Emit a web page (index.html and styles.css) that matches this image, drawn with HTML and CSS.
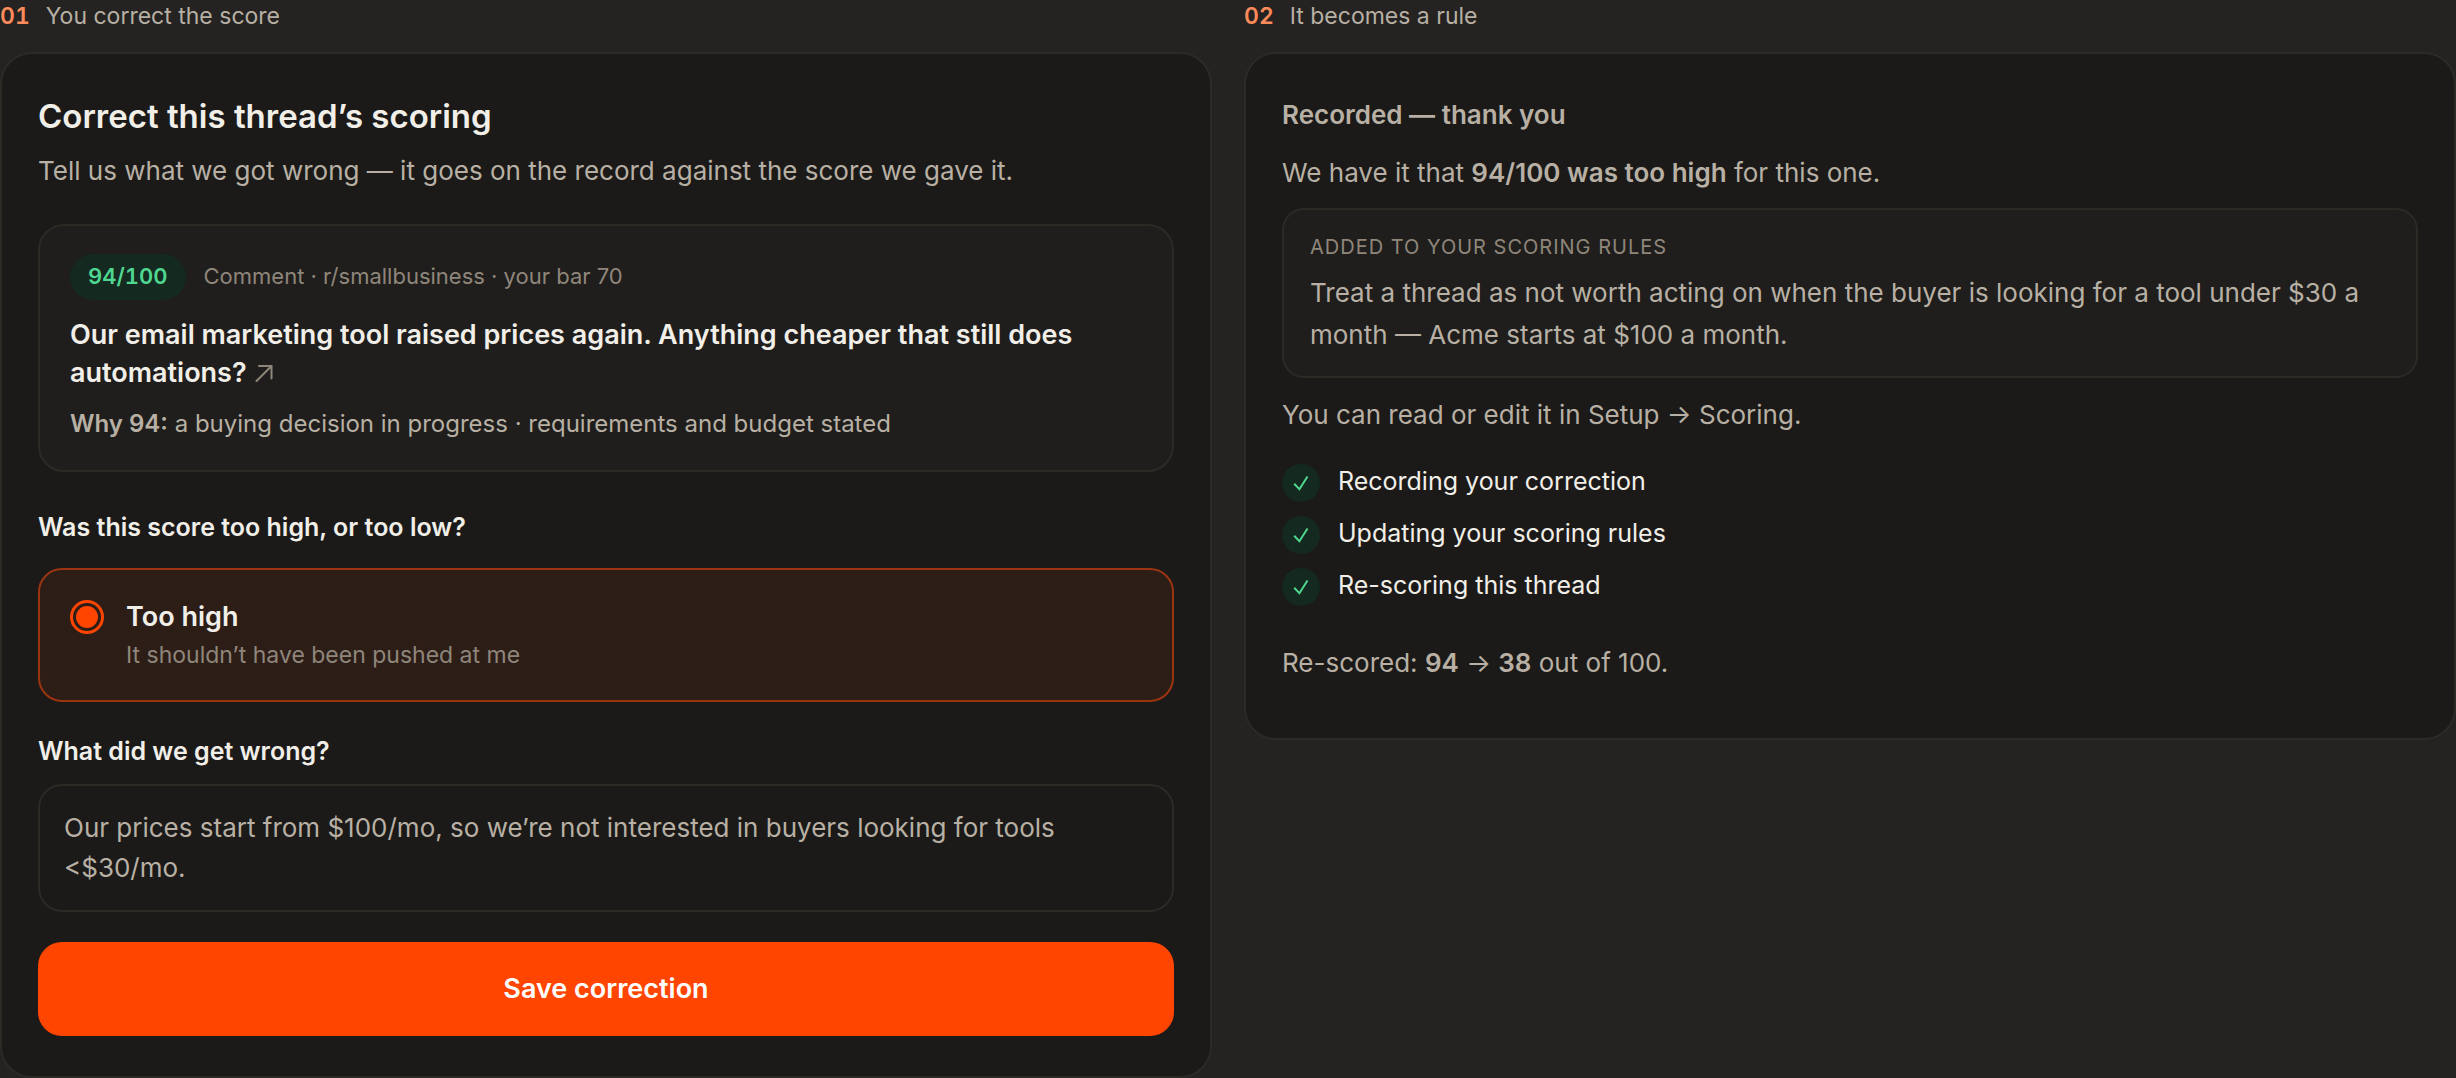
FILE: index.html
```html
<!DOCTYPE html>
<html lang="en">
<head>
    <meta charset="UTF-8">
    <meta name="viewport" content="width=device-width, initial-scale=1.0">
    <title>Correct this thread’s scoring</title>
    <link rel="stylesheet" href="styles.css">
</head>
<body>

    <main class="steps">
        <!-- Step 1: the correction form -->
        <section class="step">
            <p class="step-label"><span class="step-number">01</span> You correct the score</p>

            <form class="card">
                <h2>Correct this thread’s scoring</h2>
                <p class="lede">Tell us what we got wrong — it goes on the record against the score we gave it.</p>

                <div class="thread">
                    <div class="thread-meta">
                        <span class="score">94/100</span>
                        <span>Comment · r/smallbusiness · your bar 70</span>
                    </div>
                    <a class="thread-title" href="#">Our email marketing tool raised prices again. Anything cheaper that still does automations? <svg class="arrow" viewBox="0 0 18 18" aria-hidden="true"><path d="M1.500 17L16 2.500M4 2H16.500V14.500"/></svg></a>
                    <p class="why"><strong>Why 94:</strong> a buying decision in progress · requirements and budget stated</p>
                </div>

                <h3 class="question">Was this score too high, or too low?</h3>
                <label class="choice">
                    <input type="radio" name="direction" value="high" checked>
                    <span class="choice-text">
                        <span class="choice-title">Too high</span>
                        <span class="choice-hint">It shouldn’t have been pushed at me</span>
                    </span>
                </label>

                <label class="reason-label" for="reason">What did we get wrong?</label>
                <textarea id="reason" name="reason" rows="2">Our prices start from $100/mo, so we’re not interested in buyers looking for tools &lt;$30/mo.</textarea>

                <button class="button" type="button">Save correction</button>
            </form>
        </section>

        <!-- Step 2: the confirmation -->
        <section class="step">
            <p class="step-label"><span class="step-number">02</span> It becomes a rule</p>

            <div class="card">
                <h3 class="recorded">Recorded — thank you</h3>
                <p class="note">We have it that <strong>94/100 was too high</strong> for this one.</p>

                <div class="rule">
                    <p class="rule-label">Added to your scoring rules</p>
                    <p class="note">Treat a thread as not worth acting on when the buyer is looking for a tool under $30 a month — Acme starts at $100 a month.</p>
                </div>

                <p class="note">You can read or edit it in Setup → Scoring.</p>

                <ul class="progress">
                    <li><span class="check"><svg viewBox="0 0 38 38" aria-hidden="true"><path d="M12.200 19.800L17.400 25.200L25.500 12.500"/></svg></span>Recording your correction</li>
                    <li><span class="check"><svg viewBox="0 0 38 38" aria-hidden="true"><path d="M12.200 19.800L17.400 25.200L25.500 12.500"/></svg></span>Updating your scoring rules</li>
                    <li><span class="check"><svg viewBox="0 0 38 38" aria-hidden="true"><path d="M12.200 19.800L17.400 25.200L25.500 12.500"/></svg></span>Re-scoring this thread</li>
                </ul>

                <p class="note result">Re-scored: <strong>94</strong> → <strong>38</strong> out of 100.</p>
            </div>
        </section>
    </main>

</body>
</html>
```
FILE: styles.css
```css
* {
    box-sizing: border-box;
}
body {
    font-family: Inter, "Liberation Sans", sans-serif;
    margin: 0;
    background-color: #242321;
    color: #b8b0a4;
    font-size: 26px;
}
h2, h3, p, ul {
    margin: 0;
    padding: 0;
}
strong {
    font-weight: 600;
}
.steps {
    display: grid;
    grid-template-columns: 1fr 1fr;
    gap: 32px;
    align-items: start;
}
.step-label {
    font-size: 23px;
    line-height: 32px;
    display: flex;
    gap: 16px;
    margin-bottom: 20px;
}
.step-number {
    color: #ff8a5c;
    font-weight: 600;
    font-variant-numeric: tabular-nums;
}
.card {
    display: flex;
    flex-direction: column;
    background-color: #1b1a18;
    border: 2px solid #2c2a25;
    border-radius: 32px;
    padding: 40px 36px;
}
h2 {
    color: #f2efe9;
    font-size: 33px;
    line-height: 44px;
    font-weight: 600;
}
.lede {
    line-height: 42px;
    margin-top: 12px;
}

/* Thread being corrected */
.thread {
    background-color: #1f1e1c;
    border: 2px solid #2c2a25;
    border-radius: 26px;
    padding: 28px 30px;
    margin-top: 32px;
}
.thread-meta {
    display: flex;
    align-items: baseline;
    gap: 18px;
    color: #8f867b;
    font-size: 22px;
}
.score {
    background-color: #14291f;
    color: #4fd690;
    font-weight: 600;
    font-variant-numeric: tabular-nums;
    line-height: 44px;
    padding: 0 18px 2px;
    border-radius: 23px;
}
.thread-title {
    display: block;
    color: #f2efe9;
    font-size: 27px;
    line-height: 38px;
    font-weight: 600;
    text-decoration: none;
    margin-top: 16px;
}
.arrow {
    width: 18px;
    height: 18px;
    margin-left: 2px;
    fill: none;
    stroke: #8f867b;
    stroke-width: 2;
    stroke-linecap: round;
}
.why {
    font-size: 24px;
    line-height: 36px;
    margin-top: 14px;
}

/* Form fields */
.question, .reason-label {
    color: #f2efe9;
    font-size: 25px;
    line-height: 38px;
    font-weight: 600;
    margin-top: 36px;
}
.choice {
    display: flex;
    gap: 22px;
    background-color: #2d1d17;
    border: 2px solid #9b3410;
    border-radius: 24px;
    padding: 28px 30px;
    margin-top: 22px;
    cursor: pointer;
}
.choice input {
    appearance: none;
    width: 34px;
    height: 34px;
    margin: 2px 0 0;
    border: 3px solid #ff4500;
    border-radius: 50%;
    padding: 3px;
    background-color: #ff4500;
    background-clip: content-box;
}
.choice-text {
    display: flex;
    flex-direction: column;
    gap: 2px;
}
.choice-title {
    color: #f2efe9;
    font-size: 27px;
    line-height: 38px;
    font-weight: 600;
}
.choice-hint {
    color: #8f867b;
    font-size: 23px;
    line-height: 34px;
}
.reason-label {
    margin-top: 30px;
}
textarea {
    font: inherit;
    line-height: 40px;
    color: #b8b0a4;
    background-color: transparent;
    border: 2px solid #2c2a25;
    border-radius: 24px;
    padding: 22px 24px;
    margin: 14px 0 0;
    resize: none;
    overflow: hidden;
}
.button {
    background-color: #ff4500;
    color: white;
    font-family: inherit;
    font-size: 27px;
    font-weight: 600;
    line-height: 38px;
    padding: 28px;
    border: none;
    border-radius: 24px;
    margin-top: 30px;
    cursor: pointer;
}

/* Confirmation */
.recorded {
    font-size: 26px;
    line-height: 42px;
    font-weight: 600;
    margin-bottom: 16px;
}
.note {
    line-height: 42px;
}
.rule {
    background-color: #1f1e1c;
    border: 2px solid #2c2a25;
    border-radius: 22px;
    padding: 22px 26px 20px;
    margin: 14px 0 16px;
}
.rule-label {
    color: #8f867b;
    font-size: 20px;
    line-height: 30px;
    letter-spacing: 1px;
    text-transform: uppercase;
    margin-bottom: 10px;
}
.progress {
    list-style: none;
    display: flex;
    flex-direction: column;
    gap: 14px;
    margin: 28px 0 36px;
}
.progress li {
    display: flex;
    gap: 18px;
    color: #f2efe9;
    font-size: 25px;
    line-height: 34px;
}
.check {
    width: 38px;
    height: 38px;
    border-radius: 50%;
    background-color: #14291f;
}
.check svg {
    display: block;
    fill: none;
    stroke: #4fd690;
    stroke-width: 2;
}
.result {
    margin-bottom: 14px;
}
```
